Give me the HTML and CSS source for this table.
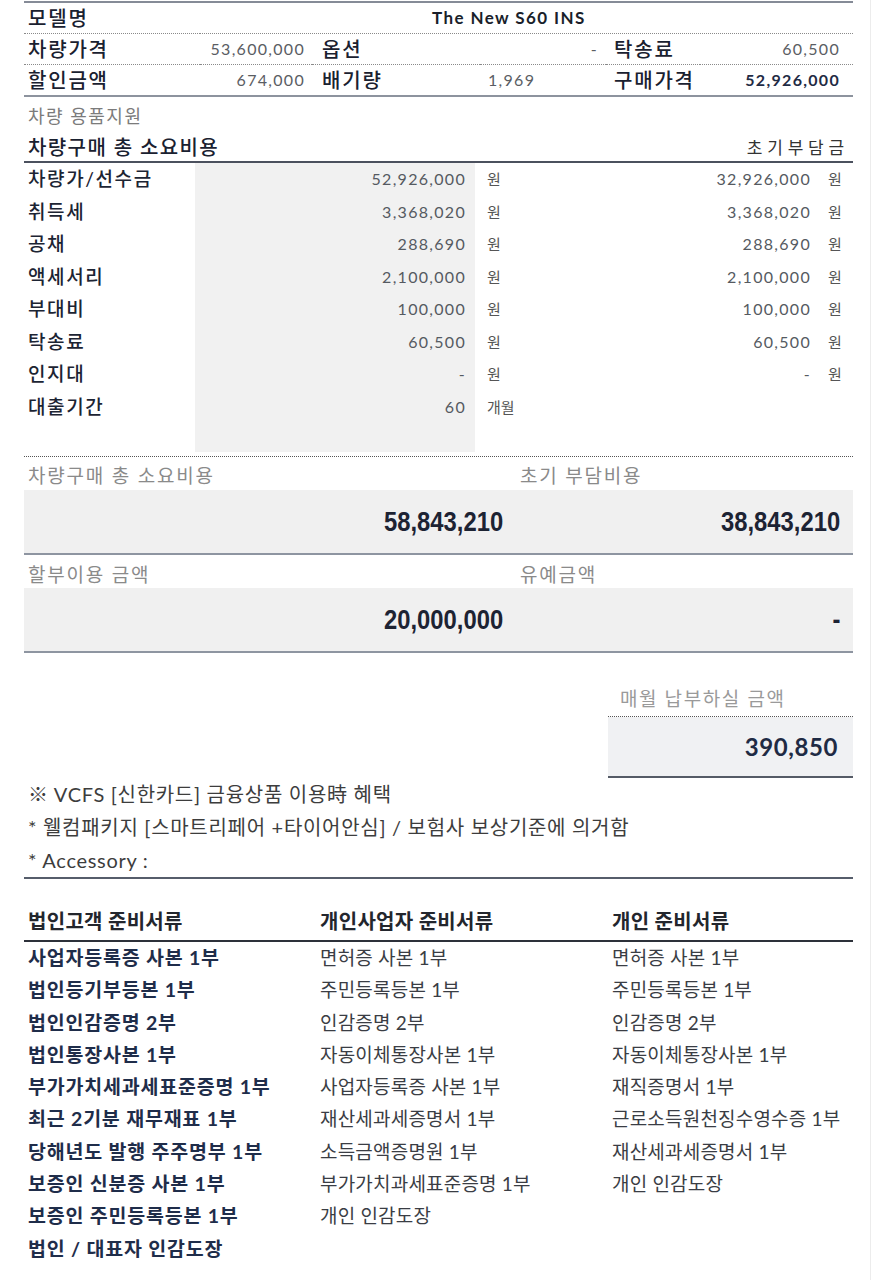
FILE: index.html
```html
<!DOCTYPE html>
<html lang="ko">
<head>
<meta charset="utf-8">
<title>견적서</title>
<link rel="stylesheet" href="styles.css">
</head>
<body>
<div class="page">
  <div class="sheet">
    <section class="spec">
      <div class="lbl">모델명</div>
      <div class="model">The New S60 INS</div>
      <div class="lbl">차량가격</div>
      <div class="num r">53,600,000</div>
      <div class="lbl l2">옵션</div>
      <div class="num r c4">-</div>
      <div class="lbl l3">탁송료</div>
      <div class="num r c6">60,500</div>
      <div class="lbl last">할인금액</div>
      <div class="num r last">674,000</div>
      <div class="lbl l2 last">배기량</div>
      <div class="num c4 left last">1,969</div>
      <div class="lbl l3 last">구매가격</div>
      <div class="num r c6 strong last">52,926,000</div>
    </section>

    <div class="sub-label">차량 용품지원</div>
    <div class="cost-head">
      <span>차량구매 총 소요비용</span>
      <span class="spaced">초기부담금</span>
    </div>

    <section class="cost">
      <div class="c-lbl">차량가/선수금</div><div class="c-val">52,926,000</div><div class="c-unit">원</div><div class="c-val2">32,926,000</div><div class="c-unit2">원</div>
      <div class="c-lbl">취득세</div><div class="c-val">3,368,020</div><div class="c-unit">원</div><div class="c-val2">3,368,020</div><div class="c-unit2">원</div>
      <div class="c-lbl">공채</div><div class="c-val">288,690</div><div class="c-unit">원</div><div class="c-val2">288,690</div><div class="c-unit2">원</div>
      <div class="c-lbl">액세서리</div><div class="c-val">2,100,000</div><div class="c-unit">원</div><div class="c-val2">2,100,000</div><div class="c-unit2">원</div>
      <div class="c-lbl">부대비</div><div class="c-val">100,000</div><div class="c-unit">원</div><div class="c-val2">100,000</div><div class="c-unit2">원</div>
      <div class="c-lbl">탁송료</div><div class="c-val">60,500</div><div class="c-unit">원</div><div class="c-val2">60,500</div><div class="c-unit2">원</div>
      <div class="c-lbl">인지대</div><div class="c-val">-</div><div class="c-unit">원</div><div class="c-val2">-</div><div class="c-unit2">원</div>
      <div class="c-lbl">대출기간</div><div class="c-val">60</div><div class="c-unit">개월</div><div class="c-val2"></div><div class="c-unit2"></div>
      <div class="c-lbl"></div><div class="c-val"></div><div class="c-unit"></div><div class="c-val2"></div><div class="c-unit2"></div>
    </section>

    <section class="totals">
      <div class="t-lbl">차량구매 총 소요비용</div>
      <div class="t-lbl t-right">초기 부담비용</div>
      <div class="t-box"><span class="big">58,843,210</span></div>
      <div class="t-box t-right-box"><span class="big">38,843,210</span></div>
    </section>
    <section class="totals second">
      <div class="t-lbl">할부이용 금액</div>
      <div class="t-lbl t-right">유예금액</div>
      <div class="t-box"><span class="big">20,000,000</span></div>
      <div class="t-box t-right-box"><span class="big">-</span></div>
    </section>

    <section class="monthly">
      <div class="m-lbl">매월 납부하실 금액</div>
      <div class="m-box">390,850</div>
    </section>

    <section class="notes">
      <p>※ VCFS [신한카드] 금융상품 이용時 혜택</p>
      <p>* 웰컴패키지 [스마트리페어 +타이어안심] / 보험사 보상기준에 의거함</p>
      <p>* Accessory :</p>
    </section>

    <section class="docs">
      <div class="d-head">법인고객 준비서류</div>
      <div class="d-head">개인사업자 준비서류</div>
      <div class="d-head">개인 준비서류</div>

      <div class="d-col corp">
        <div>사업자등록증 사본 1부</div>
        <div>법인등기부등본 1부</div>
        <div>법인인감증명 2부</div>
        <div>법인통장사본 1부</div>
        <div>부가가치세과세표준증명 1부</div>
        <div>최근 2기분 재무재표 1부</div>
        <div>당해년도 발행 주주명부 1부</div>
        <div>보증인 신분증 사본 1부</div>
        <div>보증인 주민등록등본 1부</div>
        <div>법인 / 대표자 인감도장</div>
      </div>
      <div class="d-col">
        <div>면허증 사본 1부</div>
        <div>주민등록등본 1부</div>
        <div>인감증명 2부</div>
        <div>자동이체통장사본 1부</div>
        <div>사업자등록증 사본 1부</div>
        <div>재산세과세증명서 1부</div>
        <div>소득금액증명원 1부</div>
        <div>부가가치과세표준증명 1부</div>
        <div>개인 인감도장</div>
      </div>
      <div class="d-col">
        <div>면허증 사본 1부</div>
        <div>주민등록등본 1부</div>
        <div>인감증명 2부</div>
        <div>자동이체통장사본 1부</div>
        <div>재직증명서 1부</div>
        <div>근로소득원천징수영수증 1부</div>
        <div>재산세과세증명서 1부</div>
        <div>개인 인감도장</div>
      </div>
    </section>
  </div>
</div>
</body>
</html>
```

FILE: styles.css
```css
* { box-sizing: border-box; }
html, body { margin: 0; padding: 0; background: #fff; }
body {
  font-family: Lato, "Noto Sans CJK KR", sans-serif;
  color: #1c2433;
  font-size: 17px;
}
.page {
  width: 871px;
  min-height: 1280px;
  border-right: 1px solid #ececec;
  padding: 1px 0 0 24px;
}
.sheet { width: 829px; }

/* spec table */
.spec {
  display: grid;
  grid-template-columns: 176px 112px 168px 126px 94px 153px;
  border-top: 2px solid #858b97;
  border-bottom: 2px solid #8d939e;
}
.spec > div {
  height: 31px;
  line-height: 30px;
  border-bottom: 1px dotted #8a8a8a;
  white-space: nowrap;
}
.spec > div.last { border-bottom: none; height: 30px; }
.lbl {
  padding-left: 4px;
  font-size: 20px;
  letter-spacing: 1.8px;
  font-weight: 500;
  color: #1a2130;
}
.l2 { padding-left: 10px; }
.l3 { padding-left: 8px; }
.model {
  grid-column: 2 / 7;
  padding-left: 232px;
  font-weight: 700;
  font-size: 17px;
  letter-spacing: 1.4px;
  color: #1a1f2b;
}
.num {
  font-size: 16px;
  letter-spacing: 1.3px;
  color: #5a5d63;
}
.num.r { text-align: right; padding-right: 7px; }
.num.c4.r { padding-right: 8px; }
.num.c6.r { padding-right: 13px; }
.num.left { padding-left: 8px; }
.num.strong { font-weight: 700; color: #1f2b44; padding-right: 12px; }

.sub-label {
  height: 34px;
  line-height: 38px;
  padding-left: 4px;
  font-size: 18px;
  letter-spacing: 1.5px;
  color: #7b7b7b;
}
.cost-head {
  height: 32px;
  display: flex;
  justify-content: space-between;
  align-items: center;
  padding: 0 8px 0 4px;
  border-bottom: 2px solid #4b515e;
  font-size: 20px;
  letter-spacing: 1.4px;
  font-weight: 500;
  color: #1a2130;
}
.cost-head .spaced { letter-spacing: 4.8px; font-size: 17px; font-weight: 400; color: #333; margin-right: -4px; }

/* cost table */
.cost {
  display: grid;
  grid-template-columns: 171px 280px 50px 290px 38px;
  grid-template-rows: repeat(8, 32.5px) 29px;
  margin-bottom: 4px;
}
.cost > div { line-height: 32.5px; white-space: nowrap; }
.c-lbl { padding-left: 4px; font-size: 19px; letter-spacing: 1.6px; font-weight: 500; color: #1c2433; }
.c-val {
  background: #f1f1f1;
  text-align: right;
  padding-right: 9px;
  font-size: 16px;
  letter-spacing: 1.3px;
  color: #555a61;
}
.c-unit { padding-left: 12px; font-size: 15px; color: #555; }
.c-val2 { text-align: right; padding-right: 4px; font-size: 16px; letter-spacing: 1.3px; color: #555a61; }
.c-unit2 { padding-left: 13px; font-size: 15px; color: #555; }

/* totals */
.totals {
  display: grid;
  grid-template-columns: 481px 348px;
  border-bottom: 2px solid #8e95a1;
}
.cost + .totals { border-top: 1px dotted #555; }
.t-lbl {
  height: 33px;
  line-height: 37px;
  padding-left: 4px;
  font-size: 19px;
  letter-spacing: 1.8px;
  color: #8a8a8a;
}
.second .t-lbl { line-height: 39px; }
.t-right { padding-left: 15px; }
.t-box {
  height: 63px;
  line-height: 63px;
  background: #f0f0f0;
  text-align: right;
  padding-right: 2px;
  font-family: "Liberation Sans", sans-serif;
  font-weight: 700;
  font-size: 28px;
  color: #1d2333;
}
.big {
  display: inline-block;
  transform: scaleX(0.85);
  transform-origin: right center;
}
.t-right-box { padding-right: 13px; }

/* monthly */
.monthly {
  margin: 28px 0 0 auto;
  width: 245px;
  border-bottom: 2px solid #555b66;
}
.m-lbl {
  height: 36px;
  line-height: 36px;
  padding-left: 12px;
  font-size: 19px;
  letter-spacing: 1.6px;
  color: #9a9a9a;
  border-bottom: 1px dotted #555;
}
.m-box {
  height: 59px;
  line-height: 59px;
  background: #f0f1f3;
  text-align: right;
  padding-right: 15px;
  font-weight: 700;
  font-size: 24px;
  letter-spacing: 0.6px;
  color: #1f2b44;
}

/* notes */
.notes {
  border-bottom: 2px solid #565d6b;
}
.notes p {
  margin: 0;
  height: 33px;
  line-height: 33px;
  padding-left: 4px;
  font-size: 20px;
  color: #3d3d3d;
  letter-spacing: 0.7px;
}

/* docs */
.docs {
  display: grid;
  grid-template-columns: 292px 292px 245px;
  margin-top: 23px;
}
.d-head {
  height: 40px;
  line-height: 38px;
  padding-left: 4px;
  border-bottom: 2px solid #2d313a;
  font-size: 20px;
  font-weight: 700;
  color: #23262d;
  letter-spacing: 0.3px;
}
.d-col > div {
  height: 32.3px;
  line-height: 32.3px;
  padding-left: 4px;
  font-size: 19px;
  letter-spacing: 0.2px;
  color: #3a3d44;
  white-space: nowrap;
}
.d-col.corp > div { font-weight: 700; font-size: 19.5px; letter-spacing: 0.8px; color: #1f2d4a; }
```
